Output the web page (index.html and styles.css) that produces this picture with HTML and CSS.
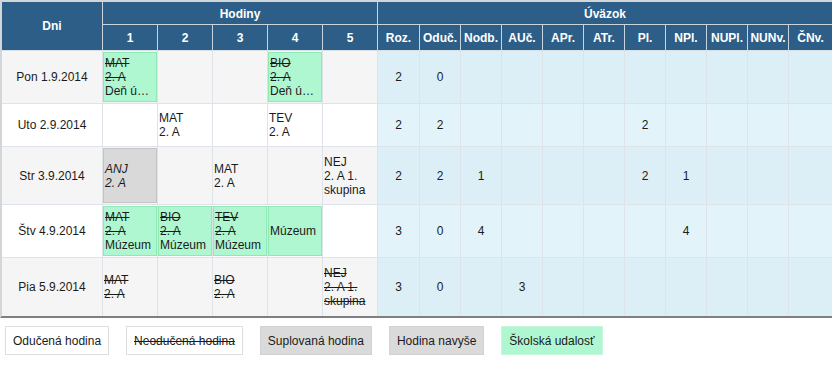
FILE: index.html
```html
<!DOCTYPE html>
<html lang="sk">
<head>
<meta charset="utf-8">
<title>Rozvrh</title>
<link rel="stylesheet" href="styles.css">
</head>
<body>
<div class="sheet">
  <div class="th th-dni">Dni</div>
  <div class="th th-hod">Hodiny</div>
  <div class="th th-uva">Úväzok</div>

  <div class="th">1</div><div class="th">2</div><div class="th">3</div><div class="th">4</div><div class="th th-hodend">5</div>
  <div class="th">Roz.</div><div class="th">Oduč.</div><div class="th">Nodb.</div><div class="th">AUč.</div><div class="th">APr.</div><div class="th">ATr.</div><div class="th">Pl.</div><div class="th">NPl.</div><div class="th">NUPl.</div><div class="th">NUNv.</div><div class="th th-last">ČNv.</div>

  <div class="row odd">
    <div class="day">Pon 1.9.2014</div>
    <div class="h"><div class="box event"><span class="s">MAT</span><span class="s">2. A</span><span>Deň ú…</span></div></div>
    <div class="h"></div>
    <div class="h"></div>
    <div class="h"><div class="box event"><span class="s">BIO</span><span class="s">2. A</span><span>Deň ú…</span></div></div>
    <div class="h"></div>
    <div class="u">2</div><div class="u">0</div><div class="u"></div><div class="u"></div><div class="u"></div><div class="u"></div><div class="u"></div><div class="u"></div><div class="u"></div><div class="u"></div><div class="u last"></div>
  </div>

  <div class="row even">
    <div class="day">Uto 2.9.2014</div>
    <div class="h"></div>
    <div class="h"><div class="plain"><span>MAT</span><span>2. A</span></div></div>
    <div class="h"></div>
    <div class="h"><div class="plain"><span>TEV</span><span>2. A</span></div></div>
    <div class="h"></div>
    <div class="u">2</div><div class="u">2</div><div class="u"></div><div class="u"></div><div class="u"></div><div class="u"></div><div class="u">2</div><div class="u"></div><div class="u"></div><div class="u"></div><div class="u last"></div>
  </div>

  <div class="row odd">
    <div class="day">Str 3.9.2014</div>
    <div class="h"><div class="box subst"><span class="i">ANJ</span><span class="i">2. A</span></div></div>
    <div class="h"></div>
    <div class="h"><div class="plain"><span>MAT</span><span>2. A</span></div></div>
    <div class="h"></div>
    <div class="h"><div class="plain"><span>NEJ</span><span>2. A 1. skupina</span></div></div>
    <div class="u">2</div><div class="u">2</div><div class="u">1</div><div class="u"></div><div class="u"></div><div class="u"></div><div class="u">2</div><div class="u">1</div><div class="u"></div><div class="u"></div><div class="u last"></div>
  </div>

  <div class="row even">
    <div class="day">Štv 4.9.2014</div>
    <div class="h"><div class="box event"><span class="s">MAT</span><span class="s">2. A</span><span>Múzeum</span></div></div>
    <div class="h"><div class="box event"><span class="s">BIO</span><span class="s">2. A</span><span>Múzeum</span></div></div>
    <div class="h"><div class="box event"><span class="s">TEV</span><span class="s">2. A</span><span>Múzeum</span></div></div>
    <div class="h"><div class="box event"><span>Múzeum</span></div></div>
    <div class="h"></div>
    <div class="u">3</div><div class="u">0</div><div class="u">4</div><div class="u"></div><div class="u"></div><div class="u"></div><div class="u"></div><div class="u">4</div><div class="u"></div><div class="u"></div><div class="u last"></div>
  </div>

  <div class="row odd lastrow">
    <div class="day">Pia 5.9.2014</div>
    <div class="h"><div class="plain"><span class="s">MAT</span><span class="s">2. A</span></div></div>
    <div class="h"></div>
    <div class="h"><div class="plain"><span class="s">BIO</span><span class="s">2. A</span></div></div>
    <div class="h"></div>
    <div class="h"><div class="plain"><span class="s">NEJ</span><span class="s">2. A 1. skupina</span></div></div>
    <div class="u">3</div><div class="u">0</div><div class="u"></div><div class="u">3</div><div class="u"></div><div class="u"></div><div class="u"></div><div class="u"></div><div class="u"></div><div class="u"></div><div class="u last"></div>
  </div>
</div>

<div class="legend">
  <div class="lg lg-done">Odučená hodina</div>
  <div class="lg lg-undone"><span class="s">Neodučená hodina</span></div>
  <div class="lg lg-subst">Suplovaná hodina</div>
  <div class="lg lg-extra">Hodina navyše</div>
  <div class="lg lg-event">Školská udalosť</div>
</div>
</body>
</html>
```
FILE: styles.css
```css
* { box-sizing: border-box; }

html, body {
  margin: 0;
  padding: 0;
  background: #fff;
  font-family: "Liberation Sans", Arial, sans-serif;
  font-size: 12px;
  color: #1b1b1b;
}

.sheet {
  display: grid;
  width: 832px;
  grid-template-columns: 101px repeat(5, 55px) 42px repeat(9, 41px) 1fr;
  grid-template-rows: 23px 26px 53px 43px 58px 53px 58px;
  border-top: 2px solid #d3d6d9;
  border-left: 2px solid #d3d6d9;
  border-bottom: 2px solid #7f7f7f;
  line-height: 14px;
}

.row { display: contents; }

.th {
  background: #2d5e87;
  color: #fff;
  font-weight: bold;
  display: flex;
  align-items: center;
  justify-content: center;
  border-right: 1px solid #c8d4de;
  border-bottom: 1px solid #d9e0e6;
  white-space: nowrap;
  overflow: hidden;
}
.th-dni { grid-row: 1 / span 2; padding-top: 0; }
.th-hod { grid-column: 2 / span 5; border-bottom-color: #c8d4de; padding-top: 1px; }
.th-uva { grid-column: 7 / span 11; border-bottom-color: #c8d4de; border-right: 0; padding-top: 1px; }
.th-last { border-right: 0; }

.day, .h, .u {
  border-right: 1px solid #dde3e8;
  border-bottom: 1px solid #dde3e8;
}
.lastrow > div { border-bottom: 0; }
.u.last { border-right: 0; }

.day {
  display: flex;
  align-items: center;
  justify-content: center;
}

.h {
  display: flex;
  flex-direction: column;
  padding: 1px 0 1px 0;
}

.u {
  display: flex;
  align-items: center;
  justify-content: center;
}

.odd .day, .odd .h { background: #f5f5f5; }
.even .day, .even .h { background: #ffffff; }
.odd .u { background: #ddeff6; }
.even .u { background: #e2f4fa; }

.box, .plain {
  flex: 1;
  display: flex;
  flex-direction: column;
  justify-content: center;
  overflow: hidden;
  white-space: nowrap;
}
.plain { padding: 0 1px; white-space: normal; }
.box { border: 1px solid transparent; padding: 0 1px; }
.event { background: #aff7d0; border-color: #90e8b6; }
.subst { background: #d9d9d9; border-color: #c4c4c4; }

.s { text-decoration: line-through; }
.i { font-style: italic; }

.legend {
  display: flex;
  gap: 17px;
  padding: 8px 0 0 5px;
}
.lg {
  height: 29px;
  display: flex;
  align-items: center;
  padding: 0 7px;
  border: 1px solid #dedede;
  background: #fff;
  white-space: nowrap;
}
.lg-subst, .lg-extra { background: #dadada; border-color: #d2d2d2; }
.lg-event { background: #aff7d0; border-color: #c6f5dc; }
```
